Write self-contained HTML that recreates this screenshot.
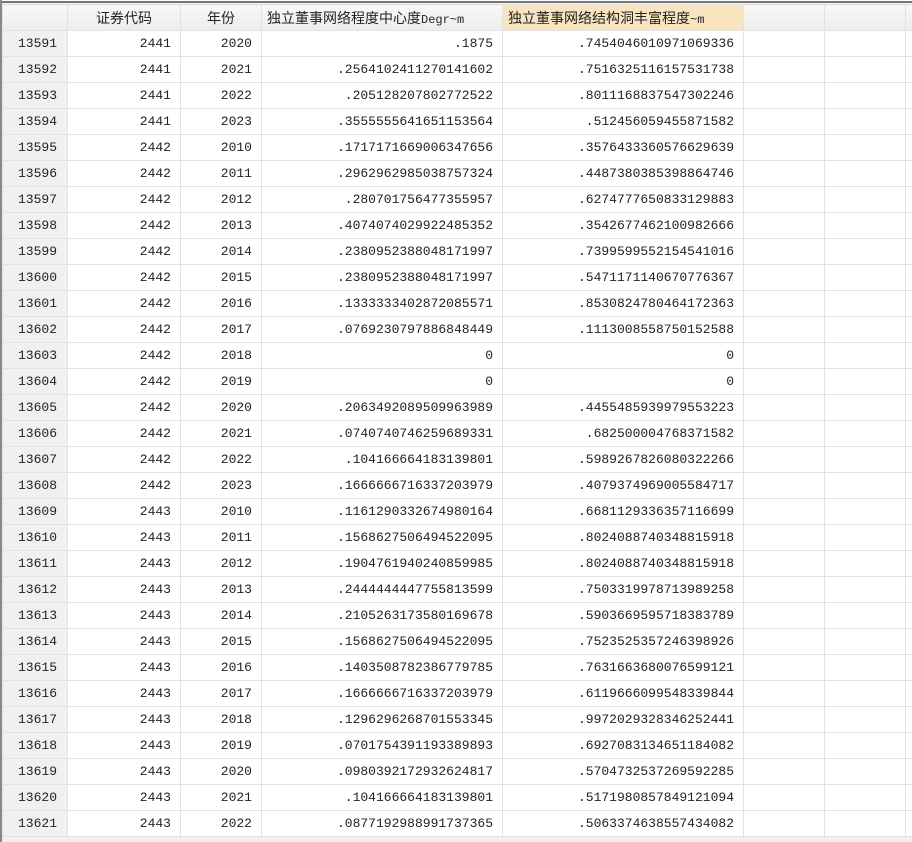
<!DOCTYPE html><html><head><style>
body{margin:0;width:912px;height:842px;background:#f0f0f0;overflow:hidden;position:relative;font-family:"Liberation Mono",monospace;}
.top{position:absolute;left:0;top:0;width:912px;height:3px;background:#fff;border-bottom:2px solid #777;box-sizing:border-box}
.left{position:absolute;left:0;top:0;width:2px;height:842px;background:#888}
table{position:absolute;left:2px;top:4px;border-collapse:collapse;table-layout:fixed;background:#fff;width:913px}
td,th{border:1px solid #e2e2e2;height:25px;padding:0 9px 0 0;font-size:13px;color:#222;white-space:nowrap;overflow:hidden;text-align:right}
th{font-family:"Liberation Sans","Noto Sans CJK SC",sans-serif;font-weight:normal;font-size:14px;text-align:center;background:linear-gradient(#f8f8f8,#ececec);padding:0;color:#222}
th.hl{background:#f9e4c0;text-align:left;padding-left:5px}
th.l{text-align:left;padding-left:5px}
td.n{background:#f0f0f0;text-align:left;padding-left:15px}
</style></head><body>
<div class="top"></div>
<table>
<colgroup><col style="width:65px"><col style="width:113px"><col style="width:81px"><col style="width:241px"><col style="width:241px"><col style="width:81px"><col style="width:81px"><col style="width:10px"></colgroup>
<tr><th></th><th>证券代码</th><th>年份</th><th class="l">独立董事网络程度中心度<span style="font-family:'Liberation Mono';font-size:12px">Degr~m</span></th><th class="hl">独立董事网络结构洞丰富程度<span style="font-family:'Liberation Mono';font-size:12px">~m</span></th><th></th><th></th><th></th></tr>
<tr><td class="n">13591</td><td>2441</td><td>2020</td><td>.1875</td><td>.7454046010971069336</td><td></td><td></td><td></td></tr>
<tr><td class="n">13592</td><td>2441</td><td>2021</td><td>.2564102411270141602</td><td>.7516325116157531738</td><td></td><td></td><td></td></tr>
<tr><td class="n">13593</td><td>2441</td><td>2022</td><td>.205128207802772522</td><td>.8011168837547302246</td><td></td><td></td><td></td></tr>
<tr><td class="n">13594</td><td>2441</td><td>2023</td><td>.3555555641651153564</td><td>.512456059455871582</td><td></td><td></td><td></td></tr>
<tr><td class="n">13595</td><td>2442</td><td>2010</td><td>.1717171669006347656</td><td>.3576433360576629639</td><td></td><td></td><td></td></tr>
<tr><td class="n">13596</td><td>2442</td><td>2011</td><td>.2962962985038757324</td><td>.4487380385398864746</td><td></td><td></td><td></td></tr>
<tr><td class="n">13597</td><td>2442</td><td>2012</td><td>.280701756477355957</td><td>.6274777650833129883</td><td></td><td></td><td></td></tr>
<tr><td class="n">13598</td><td>2442</td><td>2013</td><td>.4074074029922485352</td><td>.3542677462100982666</td><td></td><td></td><td></td></tr>
<tr><td class="n">13599</td><td>2442</td><td>2014</td><td>.2380952388048171997</td><td>.7399599552154541016</td><td></td><td></td><td></td></tr>
<tr><td class="n">13600</td><td>2442</td><td>2015</td><td>.2380952388048171997</td><td>.5471171140670776367</td><td></td><td></td><td></td></tr>
<tr><td class="n">13601</td><td>2442</td><td>2016</td><td>.1333333402872085571</td><td>.8530824780464172363</td><td></td><td></td><td></td></tr>
<tr><td class="n">13602</td><td>2442</td><td>2017</td><td>.0769230797886848449</td><td>.1113008558750152588</td><td></td><td></td><td></td></tr>
<tr><td class="n">13603</td><td>2442</td><td>2018</td><td>0</td><td>0</td><td></td><td></td><td></td></tr>
<tr><td class="n">13604</td><td>2442</td><td>2019</td><td>0</td><td>0</td><td></td><td></td><td></td></tr>
<tr><td class="n">13605</td><td>2442</td><td>2020</td><td>.2063492089509963989</td><td>.4455485939979553223</td><td></td><td></td><td></td></tr>
<tr><td class="n">13606</td><td>2442</td><td>2021</td><td>.0740740746259689331</td><td>.682500004768371582</td><td></td><td></td><td></td></tr>
<tr><td class="n">13607</td><td>2442</td><td>2022</td><td>.104166664183139801</td><td>.5989267826080322266</td><td></td><td></td><td></td></tr>
<tr><td class="n">13608</td><td>2442</td><td>2023</td><td>.1666666716337203979</td><td>.4079374969005584717</td><td></td><td></td><td></td></tr>
<tr><td class="n">13609</td><td>2443</td><td>2010</td><td>.1161290332674980164</td><td>.6681129336357116699</td><td></td><td></td><td></td></tr>
<tr><td class="n">13610</td><td>2443</td><td>2011</td><td>.1568627506494522095</td><td>.8024088740348815918</td><td></td><td></td><td></td></tr>
<tr><td class="n">13611</td><td>2443</td><td>2012</td><td>.1904761940240859985</td><td>.8024088740348815918</td><td></td><td></td><td></td></tr>
<tr><td class="n">13612</td><td>2443</td><td>2013</td><td>.2444444447755813599</td><td>.7503319978713989258</td><td></td><td></td><td></td></tr>
<tr><td class="n">13613</td><td>2443</td><td>2014</td><td>.2105263173580169678</td><td>.5903669595718383789</td><td></td><td></td><td></td></tr>
<tr><td class="n">13614</td><td>2443</td><td>2015</td><td>.1568627506494522095</td><td>.7523525357246398926</td><td></td><td></td><td></td></tr>
<tr><td class="n">13615</td><td>2443</td><td>2016</td><td>.1403508782386779785</td><td>.7631663680076599121</td><td></td><td></td><td></td></tr>
<tr><td class="n">13616</td><td>2443</td><td>2017</td><td>.1666666716337203979</td><td>.6119666099548339844</td><td></td><td></td><td></td></tr>
<tr><td class="n">13617</td><td>2443</td><td>2018</td><td>.1296296268701553345</td><td>.9972029328346252441</td><td></td><td></td><td></td></tr>
<tr><td class="n">13618</td><td>2443</td><td>2019</td><td>.0701754391193389893</td><td>.6927083134651184082</td><td></td><td></td><td></td></tr>
<tr><td class="n">13619</td><td>2443</td><td>2020</td><td>.0980392172932624817</td><td>.5704732537269592285</td><td></td><td></td><td></td></tr>
<tr><td class="n">13620</td><td>2443</td><td>2021</td><td>.104166664183139801</td><td>.5171980857849121094</td><td></td><td></td><td></td></tr>
<tr><td class="n">13621</td><td>2443</td><td>2022</td><td>.0877192988991737365</td><td>.5063374638557434082</td><td></td><td></td><td></td></tr>
</table>
<div class="left"></div>
</body></html>
